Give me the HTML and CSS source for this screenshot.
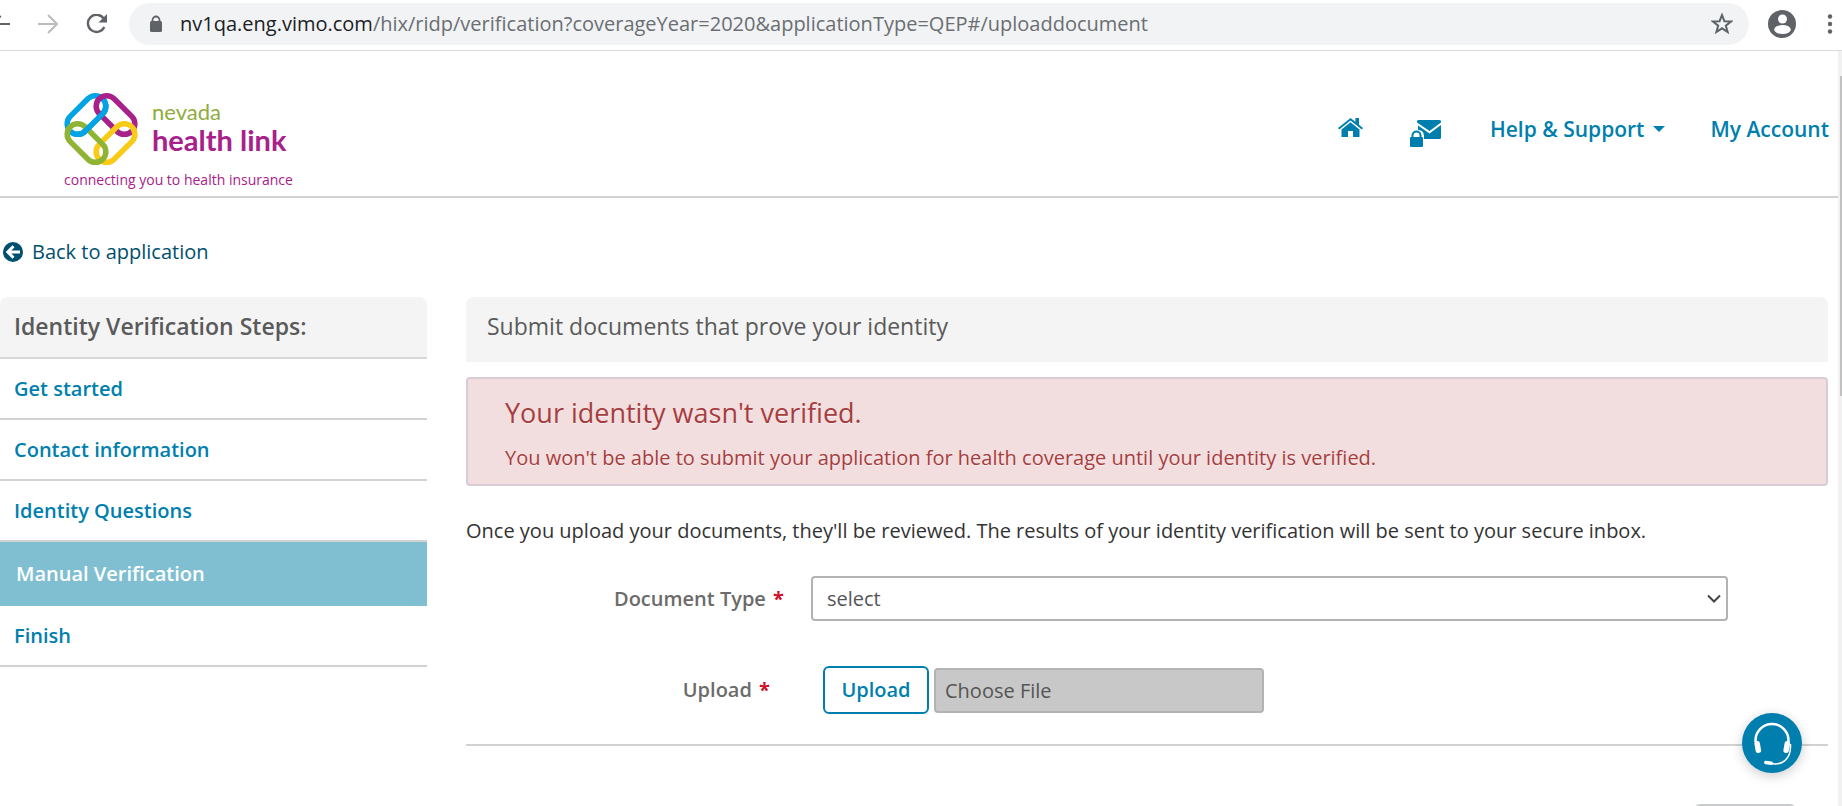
FILE: index.html
```html
<!DOCTYPE html>
<html lang="en">
<head>
<meta charset="utf-8">
<title>Nevada Health Link - Identity Verification</title>
<link rel="stylesheet" href="styles.css">
</head>
<body>
<div class="browser">
  <div class="nav-buttons">
    <button class="tool back" aria-label="Back"><svg width="10" height="20" viewBox="0 0 10 20"><path d="M0 10H10M-1 2l2 1" fill="none" stroke="#5f6368" stroke-width="2"/></svg></button>
    <button class="tool" aria-label="Forward"><svg width="20" height="20" viewBox="0 0 20 20"><path d="M0 10H19M10 1l9 9-9 9" fill="none" stroke="#babcbe" stroke-width="2"/></svg></button>
    <button class="tool" aria-label="Reload"><svg width="22" height="20" viewBox="0 0 22 20"><path d="M17.5 4.3A8.600 8.600 0 1 0 18.300 13" fill="none" stroke="#5f6368" stroke-width="2.400"/><path d="M21 0v8.500h-8.500z" fill="#5f6368"/></svg></button>
  </div>
  <div class="address">
    <svg width="14" height="18" viewBox="0 0 14 18"><path d="M3.500 7V5a3.500 3.500 0 0 1 7 0v2" fill="none" stroke="#5f6368" stroke-width="1.800"/><rect x="1" y="6" width="12" height="11" rx="1.500" fill="#5f6368"/></svg>
    <span class="url"><span class="host">nv1qa.eng.vimo.com</span>/hix/ridp/verification?coverageYear=2020&amp;applicationType=QEP#/uploaddocument</span>
    <button class="tool" aria-label="Bookmark"><svg width="22" height="22" viewBox="0 0 22 22"><path d="M11 2l2.400 6.200 6.600.3-5.200 4.100 1.800 6.400-5.600-3.700L5.400 19l1.800-6.400L2 8.500l6.600-.3z" fill="none" stroke="#5f6368" stroke-width="2"/></svg></button>
  </div>
  <div class="browser-end">
    <button class="tool" aria-label="Profile"><svg width="28" height="28" viewBox="0 0 28 28"><circle cx="14" cy="14" r="14" fill="#5f6368"/><circle cx="14.500" cy="9" r="4.500" fill="#fff"/><ellipse cx="14.500" cy="19.500" rx="8.300" ry="4.500" fill="#fff"/></svg></button>
    <button class="tool" aria-label="Menu"><svg width="6" height="20" viewBox="0 0 6 20"><g fill="#5f6368"><circle cx="3" cy="2.500" r="2.200"/><circle cx="3" cy="10" r="2.200"/><circle cx="3" cy="17.500" r="2.200"/></g></svg></button>
  </div>
</div>
<div class="viewport">
<div class="page">
  <header class="site-header">
    <a class="logo" href="#">
      <span class="brand">
        <svg width="74" height="74" viewBox="0 0 74 74">
          <defs>
            <clipPath id="blue-over"><rect x="32" y="12" width="16" height="22"/><rect x="12" y="32" width="20" height="16"/></clipPath>
          </defs>
          <g fill="none" stroke-width="5.500">
            <rect x="-.5" y="12.500" width="46" height="21" rx="10.500" transform="rotate(-45 22.500 23)" stroke="#00a3e4"/>
            <rect x="28.500" y="12.500" width="46" height="21" rx="10.500" transform="rotate(45 51.500 23)" stroke="#a8218b"/>
            <rect x="28.500" y="40.500" width="46" height="21" rx="10.500" transform="rotate(-45 51.500 51)" stroke="#f9cb16"/>
            <rect x="-.5" y="40.500" width="46" height="21" rx="10.500" transform="rotate(45 22.500 51)" stroke="#8fb333"/>
            <g clip-path="url(#blue-over)"><rect x="-.5" y="12.500" width="46" height="21" rx="10.500" transform="rotate(-45 22.500 23)" stroke="#00a3e4"/></g>
          </g>
        </svg>
        <span class="brand-name"><span class="brand-top">nevada</span><span class="brand-main">health link</span></span>
      </span>
      <span class="tagline">connecting you to health insurance</span>
    </a>
    <nav class="site-nav">
      <a href="#" class="home" aria-label="Home"><svg width="25" height="21" viewBox="0 0 25 21"><path fill="#007faf" d="M12.500 1L0 11l1.200 1.500L12.500 3.500l11.300 9L25 11l-4-3.300V1h-3.600v3.800zM12.500 5.300L3.500 12.500V20h6.500v-6h5v6h6.500v-7.500z"/></svg></a>
      <a href="#" class="mail" aria-label="Secure inbox"><svg width="33" height="29" viewBox="0 0 33 29"><path fill="#007faf" d="M9.500 1h21A1.500 1.500 0 0 1 32 2.500v1L20.500 12 8 3.500v-1A1.500 1.500 0 0 1 9.500 1zM32 6v12.500a1.500 1.500 0 0 1-1.500 1.500H15v-2.500C15 13 12.500 11 9 11V6.500L20.500 14.500z"/><path d="M3.500 19v-2.500a4 4 0 0 1 8 0V19" fill="none" stroke="#007faf" stroke-width="2"/><rect x="1" y="18" width="13" height="10" rx="1" fill="#007faf"/></svg></a>
      <a href="#" class="help">Help &amp; Support <svg width="12" height="6" viewBox="0 0 12 6"><path d="M0 0h12L6 6z" fill="#007faf"/></svg></a>
      <a href="#">My Account</a>
    </nav>
  </header>
  <a class="back-link" href="#"><svg width="20" height="20" viewBox="0 0 20 20"><circle cx="10" cy="10" r="10" fill="#004f6e"/><path d="M17 10H5M10.500 4.300L4.800 10l5.700 5.700" fill="none" stroke="#fff" stroke-width="3"/></svg>Back to application</a>
  <div class="columns">
    <aside class="steps">
      <h2 class="steps-title">Identity Verification Steps:</h2>
      <a class="step" href="#">Get started</a>
      <a class="step" href="#">Contact information</a>
      <a class="step" href="#">Identity Questions</a>
      <a class="step active" href="#" aria-current="step">Manual Verification</a>
      <a class="step" href="#">Finish</a>
    </aside>
    <main class="main">
      <h1 class="main-title">Submit documents that prove your identity</h1>
      <div class="alert" role="alert">
        <h2 class="alert-title">Your identity wasn't verified.</h2>
        <p class="alert-text">You won't be able to submit your application for health coverage until your identity is verified.</p>
      </div>
      <p class="intro">Once you upload your documents, they'll be reviewed. The results of your identity verification will be sent to your secure inbox.</p>
      <form class="form">
        <div class="row">
          <label class="label" for="doctype">Document Type <span class="req">*</span></label>
          <div class="select-wrap">
            <select class="select" id="doctype"><option>select</option></select>
            <svg class="chevron" width="14" height="9" viewBox="0 0 14 9"><path d="M1 1.500l6 6 6-6" fill="none" stroke="#444" stroke-width="2"/></svg>
          </div>
        </div>
        <div class="row upload-row">
          <label class="label" for="file">Upload <span class="req">*</span></label>
          <div class="upload">
            <button class="upload-button" type="button">Upload</button>
            <input class="file" id="file" type="text" placeholder="Choose File" disabled>
          </div>
        </div>
        <div class="actions"><button class="next" type="button" aria-label="Continue"></button></div>
      </form>
    </main>
  </div>
</div>
<div class="scrollbar"><div class="thumb"></div></div>
</div>
<button class="chat" aria-label="Chat support"><svg width="60" height="60" viewBox="0 0 60 60"><path d="M13.500 29v-1.500a16.500 16.500 0 0 1 33 0V29" fill="none" stroke="#fff" stroke-width="2.500"/><rect x="13" y="28" width="5.500" height="12" rx="2.500" transform="rotate(-10 15.500 34)" fill="#fff"/><rect x="42" y="28" width="5.500" height="12" rx="2.500" transform="rotate(10 44.500 34)" fill="#fff"/><path d="M48.500 31v3C48.500 45 41 53 28 50.500" fill="none" stroke="#fff" stroke-width="1.500"/><rect x="22" y="48" width="9" height="3.500" rx="1.700" transform="rotate(8 26 50)" fill="#fff"/></svg></button>
</body>
</html>
```

FILE: styles.css
```css
* { box-sizing: border-box; }
body {
  margin: 0;
  height: 100vh;
  display: flex;
  flex-direction: column;
  overflow: hidden;
  background: #fff;
  color: #333;
  font-family: "Open Sans", "Noto Sans", sans-serif;
  font-size: 20px;
  line-height: 28px;
}
h1, h2, p { margin: 0; }
a { text-decoration: none; color: #007faf; }
svg { display: block; flex: none; }
button, input, select { font: inherit; }

.browser {
  flex: none;
  display: flex;
  align-items: center;
  gap: 21px;
  height: 51px;
  padding: 3px 9px 5px 0;
  border-bottom: 1px solid #d8dadc;
}
.tool { flex: none; padding: 0; border: 0; background: none; }
.nav-buttons { flex: none; display: flex; align-items: center; gap: 28px; }
.address {
  flex: 1;
  display: flex;
  align-items: center;
  height: 42px;
  padding: 0 16px 0 20px;
  border-radius: 21px;
  background: #f1f3f4;
}
.url { flex: 1; padding-left: 17px; font-size: 20px; color: #6b6e72; }
.host { color: #202124; }
.browser-end { display: flex; align-items: center; gap: 31px; margin-left: -2px; }

.viewport { flex: 1; min-height: 0; display: flex; }
.page { flex: 1; min-width: 0; overflow: hidden; }
.scrollbar { width: 4px; padding: 25px 0 0 2px; background: #f1f1f1; }
.thumb { height: 320px; background: #c1c1c1; }

.site-header {
  display: flex;
  justify-content: space-between;
  align-items: flex-start;
  height: 147px;
  padding: 41px 9px 0 64px;
  border-bottom: 2px solid #d2d2d2;
}
.logo { display: flex; flex-direction: column; color: #a8218b; }
.brand { display: flex; gap: 14px; }
.brand-name { display: flex; flex-direction: column; padding-top: 7px; font-family: Lato, sans-serif; }
.brand-top { font-size: 22px; line-height: 26px; color: #8fac3c; }
.brand-main { font-size: 29px; line-height: 29px; font-weight: 700; }
.tagline { font-size: 14px; line-height: 28px; }
.site-nav { display: flex; align-items: flex-start; padding-top: 23px; font-size: 21px; font-weight: 600; }
.home { padding: 2px 46px 0 0; }
.mail { padding: 4px 48px 0 0; }
.help { display: flex; align-items: center; gap: 9px; padding-right: 45px; }

.back-link {
  display: flex;
  align-items: center;
  gap: 9px;
  padding: 40px 0 31px 3px;
  color: #004f6e;
}
.columns {
  display: grid;
  grid-template-columns: 427fr 1362fr;
  column-gap: 39px;
  padding-right: 10px;
}
.steps-title {
  padding: 15px 14px 17px;
  border-bottom: 2px solid #d8d8d8;
  border-radius: 8px 8px 0 0;
  background: #f4f4f4;
  color: #5a5a5a;
  font-size: 23px;
  line-height: 28px;
  font-weight: 600;
}
.step {
  display: block;
  padding: 16px 14px;
  border-bottom: 2px solid #d2d2d2;
  line-height: 27px;
  font-weight: 600;
}
.active {
  border: 2px solid #80bfd2;
  line-height: 28px;
  background: #80bfd2;
  color: #fff;
}

.main-title {
  padding: 15px 21px 22px;
  border-radius: 8px 8px 0 0;
  background: #f4f4f4;
  color: #5a5a5a;
  font-size: 23px;
  line-height: 28px;
  font-weight: 400;
}
.alert {
  margin-top: 15px;
  padding: 16px 37px 12px;
  border: 2px solid #d8ccd6;
  border-radius: 4px;
  background: #f2dede;
  color: #a63d40;
  text-shadow: 0 1px 0 rgba(255, 255, 255, 0.5);
}
.alert-title { font-size: 27px; line-height: 36px; font-weight: 400; }
.alert-text { padding-top: 13px; }
.intro { padding: 31px 0; }
.row { display: flex; align-items: center; padding-right: 100px; }
.label { width: 318px; text-align: right; color: #6b6b6b; font-weight: 600; }
.req { margin-left: 2px; color: #d0112b; font-weight: 700; }
.select-wrap { position: relative; flex: 1; margin-left: 27px; }
.select {
  display: block;
  width: 100%;
  height: 45px;
  padding: 0 14px;
  border: 2px solid #b3b3b3;
  border-radius: 4px;
  appearance: none;
  background: #fff;
  color: #555;
}
.chevron { position: absolute; top: 18px; right: 7px; pointer-events: none; }
.upload-row { padding: 45px 0 30px; border-bottom: 2px solid #d2d2d2; }
.upload-row .label { width: 304px; }
.upload { display: flex; align-items: center; gap: 5px; margin-left: 53px; }
.upload-button {
  width: 106px;
  height: 48px;
  border: 2px solid #007faf;
  border-radius: 6px;
  background: #fff;
  color: #007faf;
  font-weight: 600;
}
.file {
  width: 330px;
  height: 45px;
  padding: 0 9px;
  border: 2px solid #b3b3b3;
  border-radius: 4px;
  background: #c8c8c8;
}
.file::placeholder { color: #555; opacity: 1; }
.actions { display: flex; justify-content: flex-end; padding: 58px 32px 0 0; }
.next { width: 102px; height: 48px; border: 2px solid #c8cacc; border-radius: 6px; background: #e6e6e6; }

.chat {
  position: fixed;
  right: 40px;
  bottom: 33px;
  width: 60px;
  height: 60px;
  padding: 0;
  border: 0;
  border-radius: 50%;
  background: #007faf;
  box-shadow: 0 3px 12px rgba(0, 0, 0, 0.2);
}
```
